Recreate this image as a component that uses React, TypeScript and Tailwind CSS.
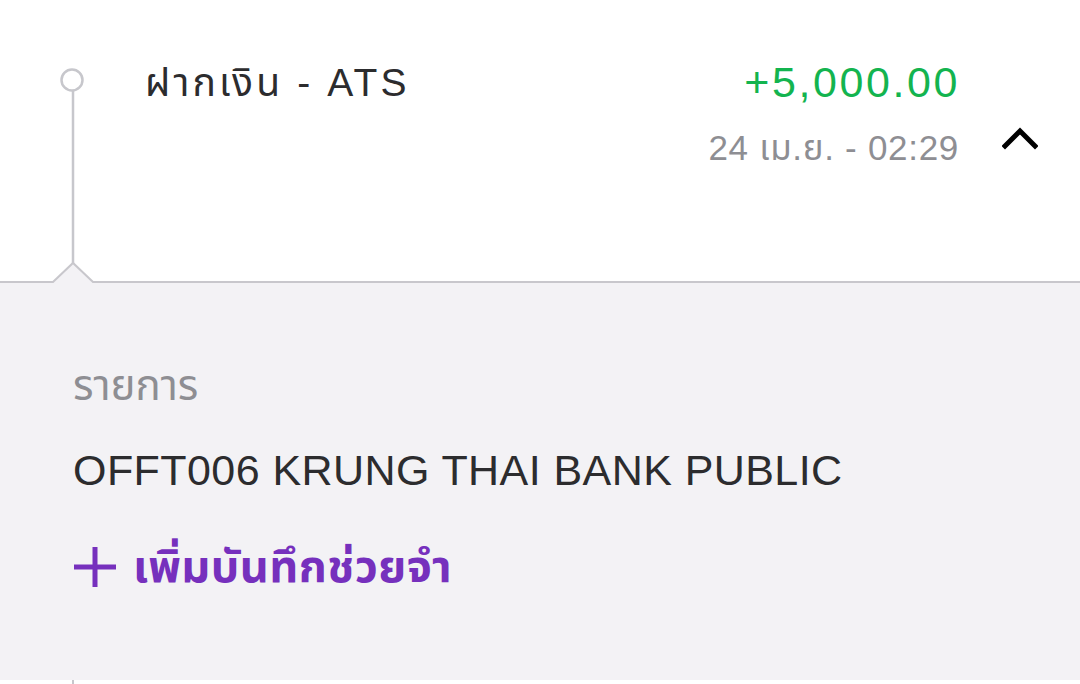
import React from "react";

const font = {
	fontFamily: '"Liberation Sans", "Noto Sans Thai", "Noto Sans", sans-serif',
};

const Timeline = () => (
	<svg width="145" height="282" viewBox="0 0 145 282" className="block">
		<circle cx="72" cy="80" r="10.5" fill="none" stroke="#c7c7cc" strokeWidth="2.5" />
		<line x1="73" y1="91" x2="73" y2="265" stroke="#c7c7cc" strokeWidth="2.5" />
	</svg>
);

const ChevronUp = () => (
	<svg width="36" height="24" viewBox="0 0 36 24" className="block">
		<path d="M3 20L18 5l15 15" fill="none" stroke="#000" strokeWidth="5" strokeLinecap="square" strokeLinejoin="miter" />
	</svg>
);

export default function App() {
	return (
		<div className="w-[1080px] h-[684px] overflow-hidden bg-white" style={font}>
			<div className="relative flex h-[283px] border-b-2 border-[#c8c7cc]">
				<Timeline />
				<div className="flex-1 pt-[63px] text-[39px] leading-none tracking-[0.08em] text-[#2c2c2e]">
					ฝากเงิน - ATS
				</div>
				<div className="flex flex-col items-end pt-[61px]">
					<div className="text-[43px] leading-none tracking-[0.06em] text-[#13b44f] mr-[-2px]">
						+5,000.00
					</div>
					<div className="mt-[26px] text-[35px] leading-none tracking-[0.02em] text-[#8e8e93] mr-[-1px]">
						24 เม.ย. - 02:29
					</div>
				</div>
				<div className="w-[122px] flex justify-end pr-[42px] pt-[126px]">
					<ChevronUp />
				</div>
				<svg width="44" height="22" viewBox="0 0 44 22" className="absolute left-[51px] bottom-[-2px]">
					<path d="M0 20.5h2L22 1.5l20 19h2V22H0z" fill="#f3f2f5" />
					<path d="M0 21h2L22 2l20 19h2" fill="none" stroke="#c8c7cc" strokeWidth="2" />
				</svg>
			</div>
			<div className="h-[397px] bg-[#f3f2f5] pl-[73px] pt-[82px]">
				<div className="text-[42px] leading-none text-[#8e8e93]">รายการ</div>
				<div className="mt-[42px] text-[43px] leading-none tracking-[0.01em] text-[#2c2c2e]">
					OFFT006 KRUNG THAI BANK PUBLIC
				</div>
				<div className="mt-[52px] flex items-center gap-[16px] text-[#7630bd]">
					<svg width="44" height="44" viewBox="0 0 44 44" className="block">
						<path d="M22 2v40M1 22h42" stroke="currentColor" strokeWidth="5" />
					</svg>
					<span className="text-[45px] font-bold leading-none tracking-[0.01em]">เพิ่มบันทึกช่วยจำ</span>
				</div>
			</div>
			<div className="h-[4px] pl-[72px]">
				<div className="h-full w-[2px] bg-[#c7c7cc]" />
			</div>
		</div>
	);
}
